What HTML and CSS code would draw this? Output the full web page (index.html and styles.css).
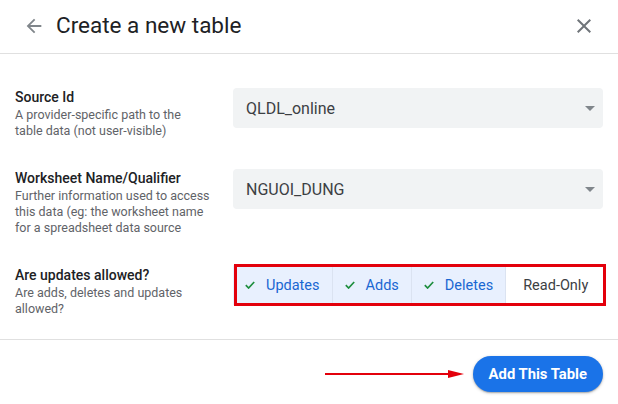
FILE: index.html
```html
<!DOCTYPE html>
<html lang="en">
<head>
<meta charset="utf-8">
<title>Create a new table</title>
<link rel="stylesheet" href="styles.css">
</head>
<body>
<div class="dialog">
  <header class="header">
    <svg class="back" viewBox="0 0 24 24" width="22" height="22" aria-hidden="true"><path d="M20 11H7.83l5.59-5.59L12 4l-8 8 8 8 1.41-1.41L7.83 13H20v-2z"/></svg>
    <h1 class="title">Create a new table</h1>
    <svg class="close" viewBox="0 0 24 24" width="24" height="24" aria-hidden="true"><path d="M19 6.41L17.59 5 12 10.59 6.41 5 5 6.41 10.59 12 5 17.59 6.41 19 12 13.41 17.59 19 19 17.59 13.41 12z"/></svg>
  </header>

  <main class="content">
    <div class="row">
      <div class="label">
        <div class="label-title">Source Id</div>
        <div class="label-desc">A provider-specific path to the<br>table data (not user-visible)</div>
      </div>
      <div class="select">
        <span class="select-value">QLDL_online</span>
        <span class="caret"></span>
      </div>
    </div>

    <div class="row">
      <div class="label">
        <div class="label-title">Worksheet Name/Qualifier</div>
        <div class="label-desc">Further information used to access<br>this data (eg: the worksheet name<br>for a spreadsheet data source</div>
      </div>
      <div class="select">
        <span class="select-value">NGUOI_DUNG</span>
        <span class="caret"></span>
      </div>
    </div>

    <div class="row">
      <div class="label">
        <div class="label-title">Are updates allowed?</div>
        <div class="label-desc">Are adds, deletes and updates<br>allowed?</div>
      </div>
      <div class="segmented">
        <div class="seg seg-on"><svg class="check" viewBox="0 0 10 8" width="10" height="8" aria-hidden="true"><path d="M0.8 4.2L3.6 7 9.2 1"/></svg>Updates</div>
        <div class="seg seg-on"><svg class="check" viewBox="0 0 10 8" width="10" height="8" aria-hidden="true"><path d="M0.8 4.2L3.6 7 9.2 1"/></svg>Adds</div>
        <div class="seg seg-on"><svg class="check" viewBox="0 0 10 8" width="10" height="8" aria-hidden="true"><path d="M0.8 4.2L3.6 7 9.2 1"/></svg>Deletes</div>
        <div class="seg seg-off">Read-Only</div>
        <div class="highlight"></div>
      </div>
    </div>
  </main>

  <footer class="footer">
    <svg class="pointer" viewBox="0 0 140 10" width="140" height="10" aria-hidden="true">
      <path d="M0 5H126" class="pointer-line"/>
      <path d="M123 1L139 5 123 9z" class="pointer-head"/>
    </svg>
    <button class="primary">Add This Table</button>
  </footer>
</div>
</body>
</html>
```

FILE: styles.css
```css
* { box-sizing: border-box; }

html, body {
  margin: 0;
  padding: 0;
  background: #ffffff;
}

body {
  font-family: Roboto, "Liberation Sans", Arial, sans-serif;
  color: #202124;
  width: 618px;
  height: 404px;
  overflow: hidden;
}

.dialog {
  display: flex;
  flex-direction: column;
}

.header {
  height: 54px;
  display: flex;
  align-items: center;
  padding: 0 22px 1px 23px;
  border-bottom: 1px solid #e0e0e0;
}

.back {
  fill: #80868b;
  flex: none;
}

.title {
  margin: 0 0 2px 11px;
  font-size: 22.5px;
  font-weight: 400;
  color: #202124;
  flex: 1;
}

.close {
  fill: #70757a;
  flex: none;
}

.content {
  display: flex;
  flex-direction: column;
  gap: 29px;
  padding: 33px 15px 22px 15px;
  border-bottom: 1px solid #e0e0e0;
}

.row {
  display: grid;
  grid-template-columns: 218px 1fr;
  align-items: start;
}

.label {
  white-space: nowrap;
}

.label-title {
  font-size: 14px;
  line-height: 20px;
  font-weight: 500;
  color: #202124;
}

.label-desc {
  font-size: 12.5px;
  line-height: 16px;
  color: #5f6368;
}

.select {
  margin-top: 1px;
  height: 40px;
  background: #f1f3f4;
  border-radius: 4px;
  display: flex;
  align-items: center;
  justify-content: space-between;
  padding: 0 8px 0 13px;
}

.select-value {
  font-size: 16px;
  color: #3c4043;
}

.caret {
  width: 0;
  height: 0;
  border-left: 5px solid transparent;
  border-right: 5px solid transparent;
  border-top: 5px solid #80868b;
  margin-top: 1px;
}

.segmented {
  position: relative;
  height: 40px;
  display: flex;
  background: #ffffff;
}

.seg {
  display: flex;
  align-items: center;
  font-size: 14.5px;
  height: 100%;
  white-space: nowrap;
}

.seg-on {
  background: #e8f0fe;
  color: #1967d2;
  padding: 0 12px 0 12px;
  border-right: 1px solid #dbe3f1;
}

.seg-off {
  flex: 1;
  color: #3c4043;
  padding: 0 12px 0 17px;
}

.check {
  fill: none;
  stroke: #1e8e3e;
  stroke-width: 1.7;
  margin-right: 11px;
  flex: none;
}

.highlight {
  position: absolute;
  top: -1px;
  left: 1px;
  right: -3px;
  bottom: -1px;
  border: 3px solid #e3000b;
  pointer-events: none;
}

.footer {
  display: flex;
  align-items: center;
  justify-content: flex-end;
  padding: 16px 15px 0 15px;
}

.pointer {
  margin-right: 8px;
  flex: none;
}

.pointer-line {
  stroke: #e3000b;
  stroke-width: 2.2;
}

.pointer-head {
  fill: #e3000b;
}

.primary {
  height: 36px;
  padding: 0 16px;
  border: none;
  border-radius: 18px;
  background: #1a73e8;
  color: #ffffff;
  font-family: Roboto, "Liberation Sans", Arial, sans-serif;
  font-size: 14.8px;
  font-weight: 700;
  box-shadow: 0 1px 3px rgba(60, 64, 67, 0.35), 0 1px 1px rgba(60, 64, 67, 0.2);
}
```
